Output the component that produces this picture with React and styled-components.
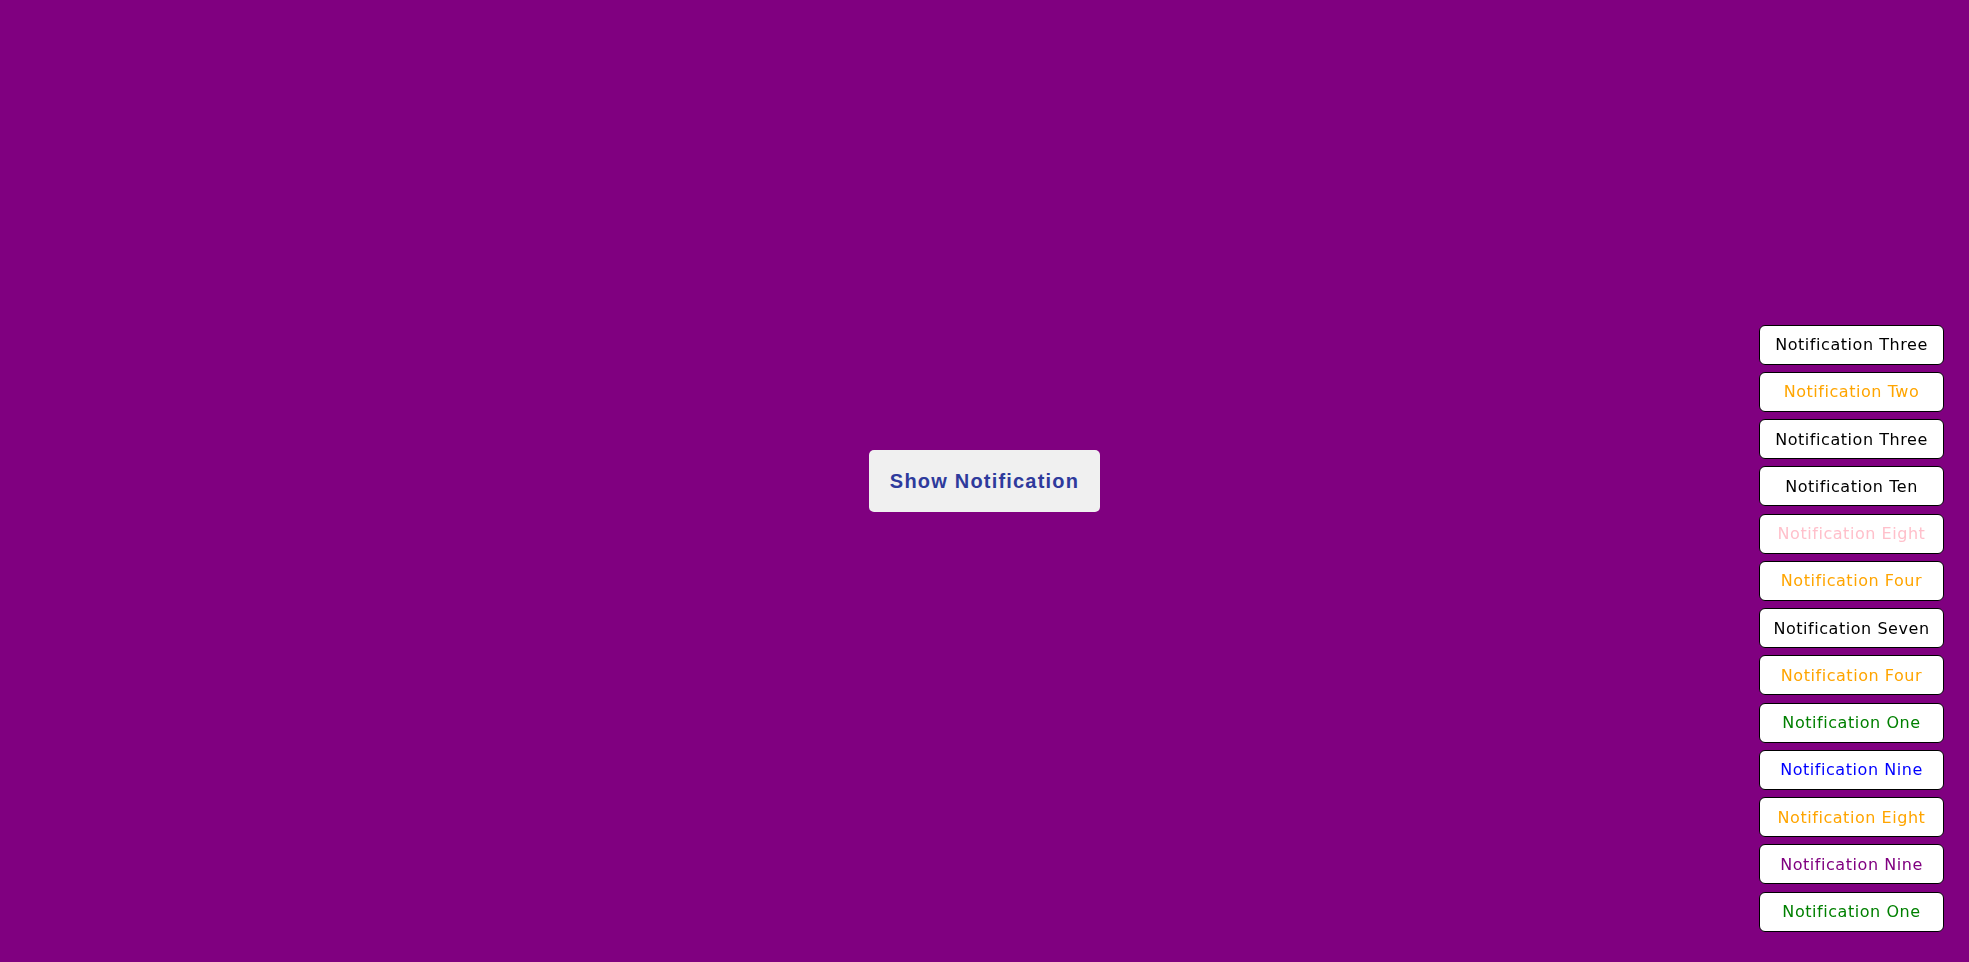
import React from "react";
import styled, { createGlobalStyle } from "styled-components";

const GlobalStyle = createGlobalStyle`
  html, body {
    margin: 0;
    padding: 0;
    background: #800080;
    overflow: hidden;
  }
  * { box-sizing: border-box; }
`;

const Page = styled.main`
  width: 100vw;
  height: 100vh;
  display: flex;
  align-items: center;
  justify-content: center;
  background: #800080;
`;

const ShowButton = styled.button`
  width: 231px;
  height: 62px;
  border: none;
  border-radius: 5px;
  background: #f0f0f0;
  color: #2e3a9c;
  font-family: "Liberation Sans", Arial, sans-serif;
  font-weight: 700;
  font-size: 20px;
  letter-spacing: 1.2px;
  cursor: pointer;
  padding: 0;
`;

const Stack = styled.ul`
  position: fixed;
  right: 25px;
  bottom: 30.5px;
  margin: 0;
  padding: 0;
  list-style: none;
  display: flex;
  flex-direction: column;
  gap: 7.25px;
`;

const Toast = styled.li`
  width: 185px;
  height: 40px;
  border: 1px solid #000;
  border-radius: 6px;
  background: #fff;
  display: flex;
  align-items: center;
  justify-content: center;
  font-family: "DejaVu Sans", "Noto Sans", sans-serif;
  font-size: 16px;
  letter-spacing: 0.55px;
  color: ${(p) => p.$color};
  white-space: nowrap;
`;

const toasts = [
  ["Notification Three", "#000000"],
  ["Notification Two", "#ffa500"],
  ["Notification Three", "#000000"],
  ["Notification Ten", "#000000"],
  ["Notification Eight", "#ffc0cb"],
  ["Notification Four", "#ffa500"],
  ["Notification Seven", "#000000"],
  ["Notification Four", "#ffa500"],
  ["Notification One", "#008000"],
  ["Notification Nine", "#0000ff"],
  ["Notification Eight", "#ffa500"],
  ["Notification Nine", "#800080"],
  ["Notification One", "#008000"],
];

export default function App() {
  return (
    <>
      <GlobalStyle />
      <Page>
        <ShowButton>Show Notification</ShowButton>
      </Page>
      <Stack>
        {toasts.map(([text, color], i) => (
          <Toast key={i} $color={color}>
            {text}
          </Toast>
        ))}
      </Stack>
    </>
  );
}
